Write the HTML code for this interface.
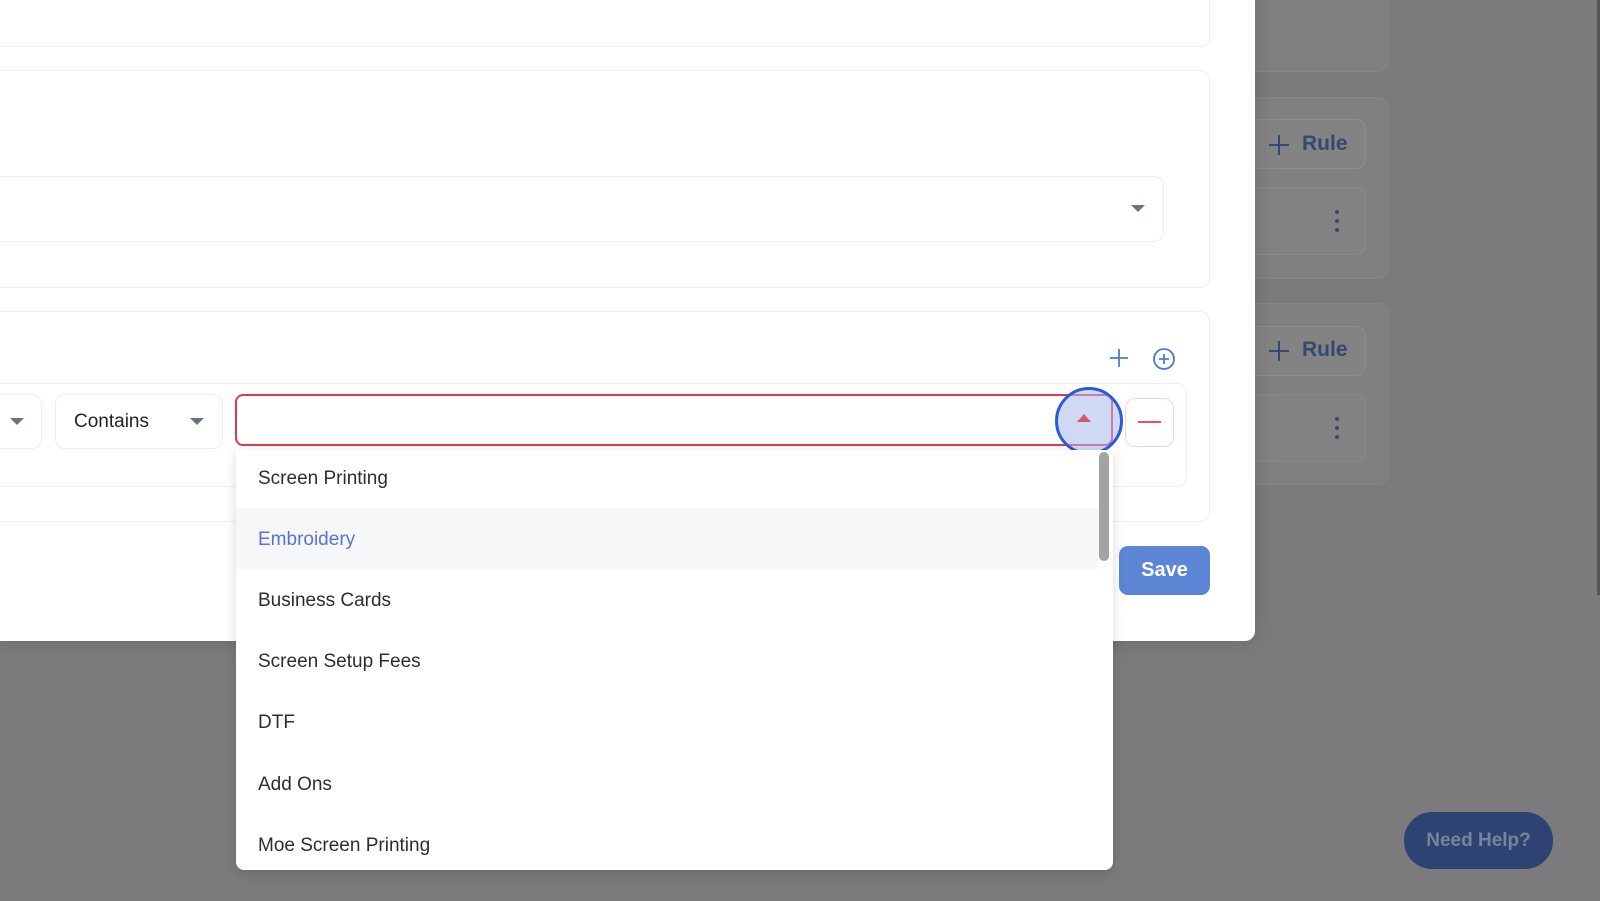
<!DOCTYPE html>
<html><head><meta charset="utf-8"><style>
*{box-sizing:border-box;margin:0;padding:0}
body{width:1600px;height:901px;overflow:hidden;background:#7b7b7d;font-family:"Liberation Sans",Arial,sans-serif;position:relative}
.a{position:absolute}
.modal{left:-20px;top:-20px;width:1275px;height:661px;background:#fff;border-radius:10px;box-shadow:0 0 20px rgba(0,0,0,.15)}
.card{border:1px solid #eceef1;border-radius:10px;background:#fff}
.gcard{background:#808081;border:1px solid #868687;border-radius:12px}
.item{left:258px;font-size:19px;color:#2a2d33;height:20px;line-height:20px}
</style></head><body>
<div class="a gcard" style="left:1230px;top:-20px;width:159px;height:92px"></div>
<div class="a gcard" style="left:1230px;top:97px;width:159px;height:182px"></div>
<div class="a gcard" style="left:1230px;top:303px;width:159px;height:182px"></div>
<div class="a" style="left:1240px;top:119px;width:126px;height:50px;border:1px solid #8e8e90;border-radius:10px;background:#838384"></div>
<div class="a" style="left:1240px;top:187px;width:126px;height:68px;border:1px solid #8a8a8b;border-radius:10px;background:#828283"></div>
<div class="a" style="left:1240px;top:326px;width:126px;height:50px;border:1px solid #8e8e90;border-radius:10px;background:#838384"></div>
<div class="a" style="left:1240px;top:394px;width:126px;height:68px;border:1px solid #8a8a8b;border-radius:10px;background:#828283"></div>
<svg class="a" style="left:1268px;top:134px" width="22" height="22"><path d="M11 1V21M1 11H21" stroke="#33496f" stroke-width="2"/></svg>
<div class="a" style="left:1302px;top:132px;font-size:21px;font-weight:bold;color:#33496f">Rule</div>
<svg class="a" style="left:1268px;top:340px" width="22" height="22"><path d="M11 1V21M1 11H21" stroke="#33496f" stroke-width="2"/></svg>
<div class="a" style="left:1302px;top:338px;font-size:21px;font-weight:bold;color:#33496f">Rule</div>
<svg class="a" style="left:1333px;top:209px" width="8" height="26"><circle cx="4" cy="3" r="2" fill="#33496f"/><circle cx="4" cy="12" r="2" fill="#33496f"/><circle cx="4" cy="21" r="2" fill="#33496f"/></svg>
<svg class="a" style="left:1333px;top:416px" width="8" height="26"><circle cx="4" cy="3" r="2" fill="#33496f"/><circle cx="4" cy="12" r="2" fill="#33496f"/><circle cx="4" cy="21" r="2" fill="#33496f"/></svg>
<div class="a" style="left:1597px;top:0;width:3px;height:595px;background:#555"></div>
<div class="a" style="left:1404px;top:812px;width:149px;height:57px;border-radius:28px;background:#2e4372;color:#77849a;font-weight:bold;font-size:19px;text-align:center;line-height:57px">Need Help?</div>

<div class="a modal"></div>
<div class="a card" style="left:-20px;top:-20px;width:1230px;height:67px"></div>
<div class="a card" style="left:-20px;top:70px;width:1230px;height:218px"></div>
<div class="a card" style="left:-20px;top:176px;width:1184px;height:66px"></div>
<svg class="a" style="left:1131px;top:205px" width="14" height="8"><path d="M0 0H14L7 7Z" fill="#6b7280"/></svg>
<div class="a card" style="left:-20px;top:311px;width:1230px;height:211px"></div>
<svg class="a" style="left:1109px;top:348px" width="20" height="20"><path d="M10 1V19M1 10H19" stroke="#4a7bd0" stroke-width="1.8"/></svg>
<svg class="a" style="left:1152px;top:347px" width="24" height="24"><circle cx="12" cy="12" r="10" fill="none" stroke="#4a7bd0" stroke-width="1.8"/><path d="M12 7V17M7 12H17" stroke="#4a7bd0" stroke-width="1.8"/></svg>
<div class="a card" style="left:-20px;top:383px;width:1207px;height:104px"></div>
<div class="a card" style="left:-20px;top:394px;width:62px;height:55px"></div>
<svg class="a" style="left:10px;top:418px" width="14" height="8"><path d="M0 0H14L7 7Z" fill="#6b7280"/></svg>
<div class="a card" style="left:55px;top:394px;width:168px;height:55px"></div>
<div class="a" style="left:74px;top:411px;font-size:19px;color:#1f2228">Contains</div>
<svg class="a" style="left:190px;top:418px" width="14" height="8"><path d="M0 0H14L7 7Z" fill="#6b7280"/></svg>
<div class="a" style="left:235px;top:394px;width:878px;height:52px;border:2px solid #e8344f;border-radius:8px;background:#fff"></div>
<div class="a" style="left:1055px;top:387px;width:68px;height:68px;border-radius:50%;border:3px solid #2b5bd7;background:rgba(170,185,235,.55)"></div>
<svg class="a" style="left:1077px;top:414px" width="14" height="8"><path d="M0 8H14L7 0Z" fill="#d35a6a"/></svg>
<div class="a" style="left:1125px;top:398px;width:49px;height:49px;border:1px solid #f7d3d8;border-radius:10px;background:#fff"></div>
<div class="a" style="left:1138px;top:421px;width:23px;height:2px;background:#ef4c5e"></div>
<div class="a" style="left:1119px;top:546px;width:91px;height:49px;border-radius:9px;background:#5c85d6;color:#fff;font-weight:bold;font-size:20px;text-align:center;line-height:49px">Save</div>

<div class="a" style="left:236px;top:450px;width:877px;height:420px;background:#fff;border-radius:0 0 8px 8px;box-shadow:0 4px 12px rgba(0,0,0,.15)"></div>
<div class="a" style="left:236px;top:508px;width:862px;height:61px;background:#f6f7f9"></div>
<div class="a" style="left:1099px;top:452px;width:10px;height:109px;border-radius:5px;background:#a3a3a3"></div>
<div class="a item" style="top:469px">Screen Printing</div>
<div class="a item" style="top:530px;color:#5a73cf">Embroidery</div>
<div class="a item" style="top:591px">Business Cards</div>
<div class="a item" style="top:652px">Screen Setup Fees</div>
<div class="a item" style="top:713px">DTF</div>
<div class="a item" style="top:775px">Add Ons</div>
<div class="a item" style="top:836px">Moe Screen Printing</div>
</body></html>
